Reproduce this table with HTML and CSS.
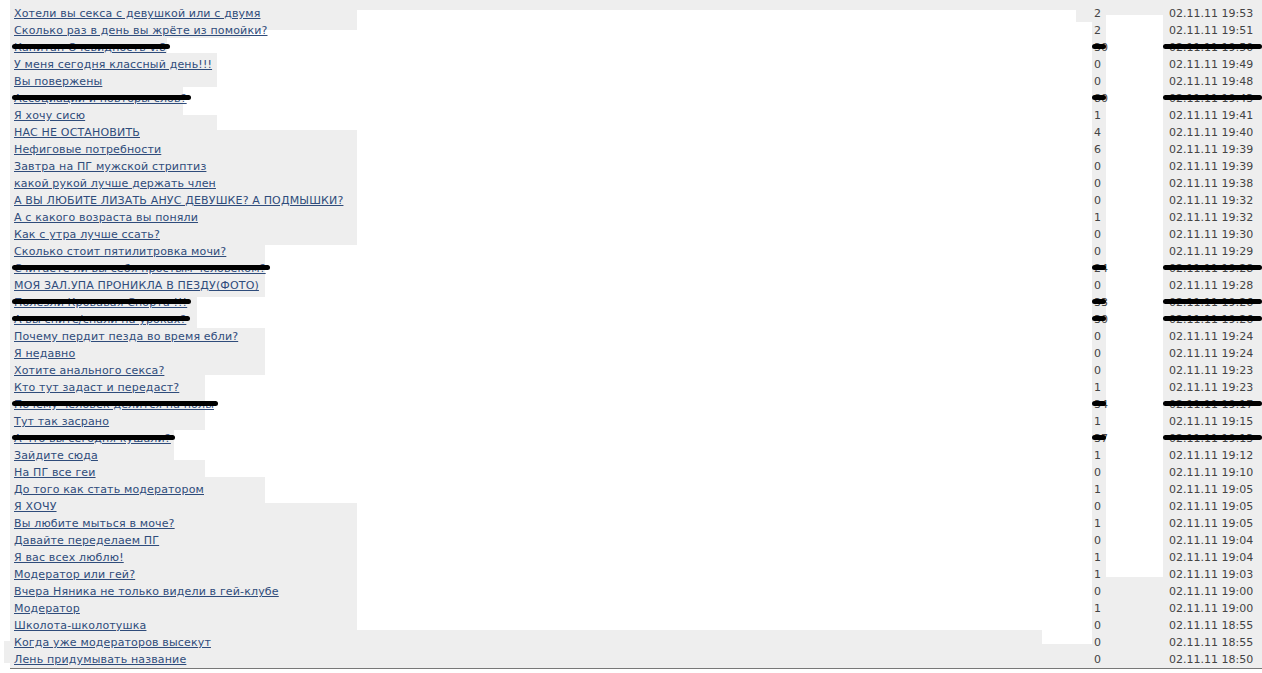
FILE: index.html
```
<!DOCTYPE html>
<html lang="ru">
<head>
  <meta charset="UTF-8">
  <title>Темы форума</title>
  <link rel="stylesheet" href="styles.css">
</head>
<body>

<div class="board">

  <!-- затёртые куски таблицы -->
  <svg class="erase" width="1262" height="673" viewBox="0 0 1262 673">
    <rect x="357" y="10" width="719" height="620"/>
    <rect x="1076" y="22" width="16" height="608"/>
    <rect x="1042" y="630" width="50" height="14"/>
    <rect x="1106" y="15" width="57" height="562"/>
    <rect x="250" y="30" width="107" height="8"/>
    <rect x="167" y="38" width="190" height="15"/>
    <rect x="217" y="53" width="140" height="34"/>
    <rect x="183" y="87" width="174" height="28"/>
    <rect x="217" y="115" width="140" height="15"/>
    <rect x="265" y="245" width="92" height="52"/>
    <rect x="197" y="297" width="160" height="31"/>
    <rect x="265" y="328" width="92" height="47"/>
    <rect x="205" y="375" width="152" height="55"/>
    <rect x="174" y="430" width="183" height="30"/>
    <rect x="205" y="460" width="152" height="17"/>
    <rect x="265" y="477" width="92" height="26"/>
    <rect class="ext" x="4" y="641" width="6" height="22"/>
  </svg>

  <div class="topics">
    <div class="topic"><div class="title"><a href="#">Хотели вы секса с девушкой или с двумя</a></div><div class="posts"><span>2</span></div><div class="date"><span>02.11.11 19:53</span></div></div>
    <div class="topic"><div class="title"><a href="#">Сколько раз в день вы жрёте из помойки?</a></div><div class="posts"><span>2</span></div><div class="date"><span>02.11.11 19:51</span></div></div>
    <div class="topic cut"><div class="title"><a href="#">Капитан Очевидность v.8</a></div><div class="posts"><span>30</span></div><div class="date"><span>02.11.11 19:50</span></div></div>
    <div class="topic"><div class="title"><a href="#">У меня сегодня классный день!!!</a></div><div class="posts"><span>0</span></div><div class="date"><span>02.11.11 19:49</span></div></div>
    <div class="topic"><div class="title"><a href="#">Вы повержены</a></div><div class="posts"><span>0</span></div><div class="date"><span>02.11.11 19:48</span></div></div>
    <div class="topic cut"><div class="title"><a href="#">Ассоциации и повторы слов?</a></div><div class="posts"><span>80</span></div><div class="date"><span>02.11.11 19:43</span></div></div>
    <div class="topic"><div class="title"><a href="#">Я хочу сисю</a></div><div class="posts"><span>1</span></div><div class="date"><span>02.11.11 19:41</span></div></div>
    <div class="topic"><div class="title"><a href="#">НАС НЕ ОСТАНОВИТЬ</a></div><div class="posts"><span>4</span></div><div class="date"><span>02.11.11 19:40</span></div></div>
    <div class="topic"><div class="title"><a href="#">Нефиговые потребности</a></div><div class="posts"><span>6</span></div><div class="date"><span>02.11.11 19:39</span></div></div>
    <div class="topic"><div class="title"><a href="#">Завтра на ПГ мужской стриптиз</a></div><div class="posts"><span>0</span></div><div class="date"><span>02.11.11 19:39</span></div></div>
    <div class="topic"><div class="title"><a href="#">какой рукой лучше держать член</a></div><div class="posts"><span>0</span></div><div class="date"><span>02.11.11 19:38</span></div></div>
    <div class="topic"><div class="title"><a href="#">А ВЫ ЛЮБИТЕ ЛИЗАТЬ АНУС ДЕВУШКЕ? А ПОДМЫШКИ?</a></div><div class="posts"><span>0</span></div><div class="date"><span>02.11.11 19:32</span></div></div>
    <div class="topic"><div class="title"><a href="#">А с какого возраста вы поняли</a></div><div class="posts"><span>1</span></div><div class="date"><span>02.11.11 19:32</span></div></div>
    <div class="topic"><div class="title"><a href="#">Как с утра лучше ссать?</a></div><div class="posts"><span>0</span></div><div class="date"><span>02.11.11 19:30</span></div></div>
    <div class="topic"><div class="title"><a href="#">Сколько стоит пятилитровка мочи?</a></div><div class="posts"><span>0</span></div><div class="date"><span>02.11.11 19:29</span></div></div>
    <div class="topic cut"><div class="title"><a href="#">Считаете ли вы себя простым человеком?</a></div><div class="posts"><span>24</span></div><div class="date"><span>02.11.11 19:28</span></div></div>
    <div class="topic"><div class="title"><a href="#">МОЯ ЗАЛ.УПА ПРОНИКЛА В ПЕЗДУ(ФОТО)</a></div><div class="posts"><span>0</span></div><div class="date"><span>02.11.11 19:28</span></div></div>
    <div class="topic cut"><div class="title"><a href="#">Полезли Кровавая Спорта !!!</a></div><div class="posts"><span>33</span></div><div class="date"><span>02.11.11 19:26</span></div></div>
    <div class="topic cut"><div class="title"><a href="#">А вы спите/спали на уроках?</a></div><div class="posts"><span>30</span></div><div class="date"><span>02.11.11 19:26</span></div></div>
    <div class="topic"><div class="title"><a href="#">Почему пердит пезда во время ебли?</a></div><div class="posts"><span>0</span></div><div class="date"><span>02.11.11 19:24</span></div></div>
    <div class="topic"><div class="title"><a href="#">Я недавно</a></div><div class="posts"><span>0</span></div><div class="date"><span>02.11.11 19:24</span></div></div>
    <div class="topic"><div class="title"><a href="#">Хотите анального секса?</a></div><div class="posts"><span>0</span></div><div class="date"><span>02.11.11 19:23</span></div></div>
    <div class="topic"><div class="title"><a href="#">Кто тут задаст и передаст?</a></div><div class="posts"><span>1</span></div><div class="date"><span>02.11.11 19:23</span></div></div>
    <div class="topic cut"><div class="title"><a href="#">Почему человек делится на полы</a></div><div class="posts"><span>34</span></div><div class="date"><span>02.11.11 19:17</span></div></div>
    <div class="topic"><div class="title"><a href="#">Тут так засрано</a></div><div class="posts"><span>1</span></div><div class="date"><span>02.11.11 19:15</span></div></div>
    <div class="topic cut"><div class="title"><a href="#">А что вы сегодня кушали?</a></div><div class="posts"><span>37</span></div><div class="date"><span>02.11.11 19:13</span></div></div>
    <div class="topic"><div class="title"><a href="#">Зайдите сюда</a></div><div class="posts"><span>1</span></div><div class="date"><span>02.11.11 19:12</span></div></div>
    <div class="topic"><div class="title"><a href="#">На ПГ все геи</a></div><div class="posts"><span>0</span></div><div class="date"><span>02.11.11 19:10</span></div></div>
    <div class="topic"><div class="title"><a href="#">До того как стать модератором</a></div><div class="posts"><span>1</span></div><div class="date"><span>02.11.11 19:05</span></div></div>
    <div class="topic"><div class="title"><a href="#">Я ХОЧУ</a></div><div class="posts"><span>0</span></div><div class="date"><span>02.11.11 19:05</span></div></div>
    <div class="topic"><div class="title"><a href="#">Вы любите мыться в моче?</a></div><div class="posts"><span>1</span></div><div class="date"><span>02.11.11 19:05</span></div></div>
    <div class="topic"><div class="title"><a href="#">Давайте переделаем ПГ</a></div><div class="posts"><span>0</span></div><div class="date"><span>02.11.11 19:04</span></div></div>
    <div class="topic"><div class="title"><a href="#">Я вас всех люблю!</a></div><div class="posts"><span>1</span></div><div class="date"><span>02.11.11 19:04</span></div></div>
    <div class="topic"><div class="title"><a href="#">Модератор или гей?</a></div><div class="posts"><span>1</span></div><div class="date"><span>02.11.11 19:03</span></div></div>
    <div class="topic"><div class="title"><a href="#">Вчера Няника не только видели в гей-клубе</a></div><div class="posts"><span>0</span></div><div class="date"><span>02.11.11 19:00</span></div></div>
    <div class="topic"><div class="title"><a href="#">Модератор</a></div><div class="posts"><span>1</span></div><div class="date"><span>02.11.11 19:00</span></div></div>
    <div class="topic"><div class="title"><a href="#">Школота-школотушка</a></div><div class="posts"><span>0</span></div><div class="date"><span>02.11.11 18:55</span></div></div>
    <div class="topic"><div class="title"><a href="#">Когда уже модераторов высекут</a></div><div class="posts"><span>0</span></div><div class="date"><span>02.11.11 18:55</span></div></div>
    <div class="topic"><div class="title"><a href="#">Лень придумывать название</a></div><div class="posts"><span>0</span></div><div class="date"><span>02.11.11 18:50</span></div></div>
  </div>

</div>

</body>
</html>
```

FILE: styles.css
```
/* Base */
body {
  margin: 0;
  font-family: "DejaVu Sans", Verdana, sans-serif;
  font-size: 11px;
  color: #444;
  background: #fff;
}

.board {
  position: relative;
  width: 1252px;
  margin-left: 10px;
  padding-top: 5px;
  background: #eeeeee;
  border-bottom: 1px solid #777;
}

/* white patches painted over the table */
.erase {
  position: absolute;
  left: -10px;
  top: 0;
  overflow: visible;
}

.erase rect {
  fill: #fff;
}

.erase .ext {
  fill: #eeeeee;
}

.topics {
  position: relative;
}

.topic {
  display: grid;
  grid-template-columns: 1082px 71px 99px;
  height: 17px;
  line-height: 17px;
}

.title {
  padding-left: 4px;
  white-space: nowrap;
}

.title a {
  position: relative;
  display: inline-block;
  color: #2f4c7b;
  letter-spacing: 0.16px;
  text-decoration: underline;
}

.posts {
  padding-left: 2px;
}

.date {
  padding-left: 6px;
  white-space: nowrap;
}

.posts span, .date span {
  position: relative;
  display: inline-block;
}

/* marker strokes over removed topics */
.cut a::after,
.cut .posts span::after,
.cut .date span::after {
  content: '';
  position: absolute;
  top: 5px;
  height: 5px;
  background: #000;
  border-radius: 3px;
}

.cut a::after {
  left: -2px;
  right: -4px;
}

.cut .posts span::after {
  left: -2px;
  width: 14px;
}

.cut .date span::after {
  left: -6px;
  right: -9px;
}
```
